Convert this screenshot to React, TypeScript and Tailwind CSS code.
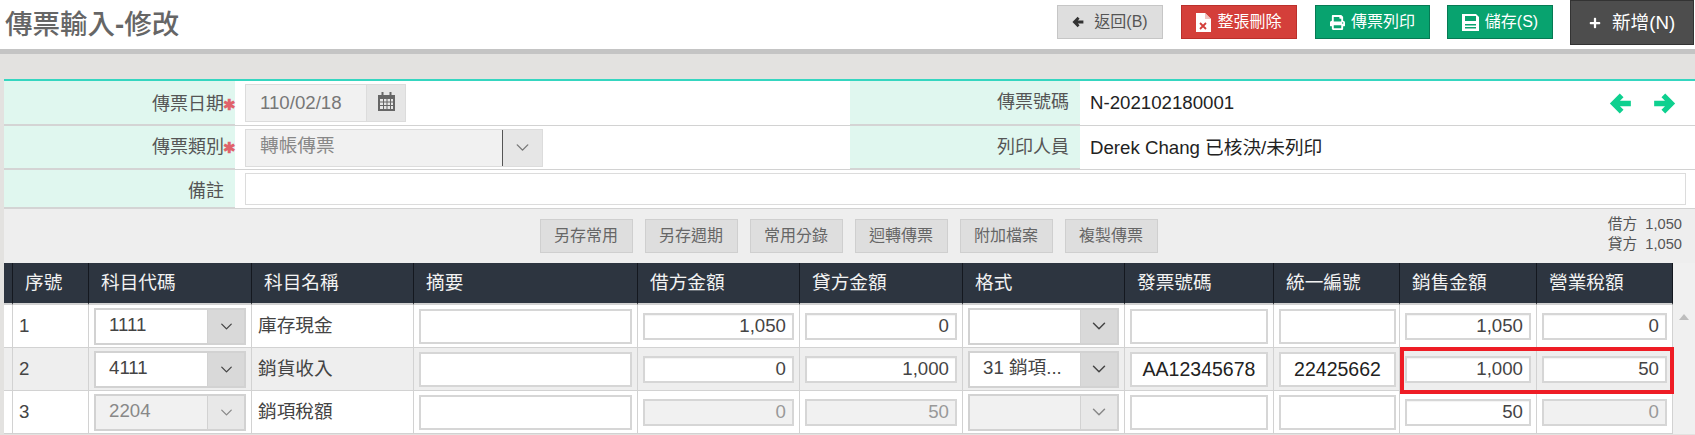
import { ChevronDown } from "lucide-react";
import { FaPlus, FaPrint } from "react-icons/fa";

const font = "font-['Liberation_Sans','Noto_Sans_CJK_TC',sans-serif]";

function Arrow({ size, flip }: { size: number; flip?: boolean }) {
  return (
    <svg width={size} height={size} viewBox="0 0 20 20" className={flip ? "-scale-x-100" : ""}>
      <path d="M11 3L4 10l7 7M5 10h14" fill="none" stroke="currentColor" strokeWidth="4.6" />
    </svg>
  );
}

function CalendarIcon() {
  return (
    <svg width="17" height="19" viewBox="0 0 17 19" className="text-[#666]">
      <path d="M0 3h17v16H0z" fill="currentColor" />
      <path d="M3.5 0h2v4.5h-2zM11.5 0h2v4.5h-2z" fill="currentColor" />
      <path
        d="M2 7h3v2.5H2zM6 7h2.5v2.5H6zM9.5 7H12v2.5H9.5zM13 7h2v2.5h-2zM2 10.5h3V13H2zM6 10.5h2.5V13H6zM9.5 10.5H12V13H9.5zM13 10.5h2V13h-2zM2 14h3v3H2zM6 14h2.5v3H6zM9.5 14H12v3H9.5zM13 14h2v3h-2z"
        fill="#e6e6e6"
      />
    </svg>
  );
}

function FileXIcon() {
  return (
    <svg width="15" height="19" viewBox="0 0 15 19">
      <path d="M0 0h9l6 6v13H0z" fill="#fff" />
      <path d="M9 0l6 6H9z" fill="#f0c4c2" />
      <path d="M4 10l6 6M10 10l-6 6" stroke="#d33f3a" strokeWidth="1.8" />
    </svg>
  );
}

function SaveIcon() {
  return (
    <svg width="17" height="17" viewBox="0 0 17 17">
      <path d="M0 0h14l3 3v14H0z" fill="#fff" />
      <path d="M3 2h11v5H3zM3 10h11v1.5H3zM3 13h11v1.5H3z" fill="#08a36f" />
    </svg>
  );
}

function TopButton({ className, children }: { className: string; children: React.ReactNode }) {
  return (
    <button className={`flex h-[34px] items-center justify-center gap-[6px] border text-[16px] ${className}`}>
      {children}
    </button>
  );
}

function FormLabel({ text, required, className = "" }: { text: string; required?: boolean; className?: string }) {
  return (
    <div className={`flex items-center justify-end border-b-2 border-[#d4d4d4] bg-[#e0f7ef] text-[18px] text-[#555] ${className}`}>
      <span>{text}</span>
      <span className="flex w-[11px] justify-center pt-[2px] text-[15px] font-bold text-[#e0636b]">{required ? "✱" : ""}</span>
    </div>
  );
}

function ToolButton({ text }: { text: string }) {
  return (
    <button className="h-[34px] w-[93px] border border-[#cfcfcf] bg-[#dedede] text-[16px] text-[#666]">{text}</button>
  );
}

function CellSelect({ value, disabled, size, addon }: { value: string; disabled?: boolean; size: number; addon: string }) {
  return (
    <div className={`flex h-[37px] border-2 border-[#d2d2d2] ${disabled ? "bg-[#f1f1f1] text-[#888]" : "bg-white text-[#444]"}`}>
      <div className="min-w-0 flex-1 truncate pl-[13px] text-[18.67px] leading-[30px]">{value}</div>
      <div className={`flex ${addon} items-center justify-center border-l border-[#d2d2d2] ${disabled ? "bg-[#e8e8e8]" : "bg-[#d9d9d9]"}`}>
        <ChevronDown size={size} strokeWidth={1.6} className={disabled ? "text-[#888]" : "text-[#444]"} />
      </div>
    </div>
  );
}

function TextBox({ value = "" }: { value?: string }) {
  return (
    <input
      readOnly
      value={value}
      className="block h-[35px] w-full border-2 border-[#d6d6d6] bg-white text-center text-[19.5px] text-[#222] outline-none"
    />
  );
}

function Amount({ value, disabled }: { value: string; disabled?: boolean }) {
  return (
    <input
      readOnly
      value={value}
      className={`block h-[27px] w-full border-2 border-[#d6d6d6] pr-[6px] text-right text-[18.67px] outline-none ${
        disabled ? "bg-[#f1f1f1] text-[#999]" : "bg-white text-[#444] shadow-[inset_0_1px_1px_rgba(0,0,0,0.05)]"
      }`}
    />
  );
}

const headers = ["序號", "科目代碼", "科目名稱", "摘要", "借方金額", "貸方金額", "格式", "發票號碼", "統一編號", "銷售金額", "營業稅額"];

const rows = [
  { no: "1", code: "1111", name: "庫存現金", debit: "1,050", credit: "0", format: "", invoice: "", tax: "", sales: "1,050", vat: "0" },
  { no: "2", code: "4111", name: "銷貨收入", debit: "0", credit: "1,000", format: "31 銷項...", invoice: "AA12345678", tax: "22425662", sales: "1,000", vat: "50" },
  { no: "3", code: "2204", name: "銷項稅額", debit: "0", credit: "50", format: "", invoice: "", tax: "", sales: "50", vat: "0", locked: true },
];

const td = "border-r border-b border-[#d2d2d2] px-[5px] align-middle";

export default function App() {
  return (
    <div className={`h-[435px] w-[1695px] overflow-hidden bg-[#e3e2e0] ${font}`}>
      <header className="flex h-[54px] items-start justify-between border-b-[5px] border-[#c4c4c4] bg-white">
        <h1 className="pl-[5px] pt-[9px] text-[27.5px] leading-[32px] font-medium text-[#666]">
          傳票輸入<span className="font-bold">-</span>修改
        </h1>
        <div className="flex items-start pr-[1px]">
          <TopButton className="mt-[5px] w-[106px] border-[#c6c6c6] bg-[#dedede] text-[#555]">
            <span className="text-[#333]"><Arrow size={12} /></span>
            <span className="ml-[4px]">返回(B)</span>
          </TopButton>
          <TopButton className="mt-[5px] ml-[18px] w-[116px] border-[#bb2f2b] bg-[#d43f3a] text-white">
            <FileXIcon />
            <span>整張刪除</span>
          </TopButton>
          <TopButton className="mt-[5px] ml-[18px] w-[115px] border-[#067a54] bg-[#08a36f] text-white">
            <FaPrint size={15} />
            <span>傳票列印</span>
          </TopButton>
          <TopButton className="mt-[5px] ml-[17px] w-[106px] border-[#067a54] bg-[#08a36f] text-white">
            <SaveIcon />
            <span>儲存(S)</span>
          </TopButton>
          <button className="ml-[17px] flex h-[45px] w-[124px] items-center justify-center gap-[11px] border border-[#333] bg-[#4d4d4d] text-[18.67px] text-white">
            <FaPlus size={12} />
            <span>新增(N)</span>
          </button>
        </div>
      </header>

      <div className="ml-[4px] mt-[25px] border-t-2 border-[#35d6c0] bg-white">
        <div className="grid grid-cols-[231px_615px_230px_1fr] grid-rows-[45px_44px_39px] text-[18.67px]">
          <FormLabel text="傳票日期" required className="pt-[3px]" />
          <div className="flex items-center border-b border-[#d2d2d2] pl-[10px]">
            <div className="flex h-[38px] w-[161px] border border-[#dcdcdc] bg-[#f1f1f1] text-[#777]">
              <div className="flex-1 pl-[14px] leading-[36px]">110/02/18</div>
              <div className="flex w-[39px] items-center justify-center border-l border-[#dcdcdc] bg-[#e6e6e6] pb-[4px]">
                <CalendarIcon />
              </div>
            </div>
          </div>
          <FormLabel text="傳票號碼" />
          <div className="flex items-center justify-between border-b border-[#d2d2d2] pl-[10px] pr-[19px] text-[#222]">
            <span>N-202102180001</span>
            <div className="flex gap-[21px] text-[#0ed08f]">
              <Arrow size={23} />
              <Arrow size={23} flip />
            </div>
          </div>

          <FormLabel text="傳票類別" required />
          <div className="flex items-center border-b border-[#d2d2d2] pl-[10px]">
            <div className="flex h-[38px] w-[298px] border border-[#dcdcdc] bg-[#f1f1f1] text-[#888]">
              <div className="flex-1 pl-[14px] leading-[32px]">轉帳傳票</div>
              <div className="flex w-[40px] items-center justify-center border-l border-[#555] bg-[#e6e6e6]">
                <ChevronDown size={21} strokeWidth={1.6} className="text-[#777]" />
              </div>
            </div>
          </div>
          <FormLabel text="列印人員" />
          <div className="flex items-center border-b border-[#d2d2d2] pl-[10px] text-[#222]">Derek Chang 已核決/未列印</div>

          <FormLabel text="備註" className="pt-[5px]" />
          <div className="col-span-3 flex items-center border-b border-[#d2d2d2] pl-[10px] pr-[9px]">
            <input readOnly className="h-[32px] w-full border border-[#dcdcdc] bg-white outline-none" />
          </div>
        </div>

        <div className="relative flex h-[54px] items-start justify-center gap-[12px] bg-[#eeeeee] pr-[2px] pt-[10px]">
          <ToolButton text="另存常用" />
          <ToolButton text="另存週期" />
          <ToolButton text="常用分錄" />
          <ToolButton text="迴轉傳票" />
          <ToolButton text="附加檔案" />
          <ToolButton text="複製傳票" />
          <div className="absolute right-[13px] top-[5px] text-right text-[14.67px] leading-[20px] text-[#555]">
            <div>借方&nbsp;&nbsp;1,050</div>
            <div>貸方&nbsp;&nbsp;1,050</div>
          </div>
        </div>

        <div className="relative flex bg-[#f0f0f0]">
          <table className="w-[1669px] table-fixed border-separate border-spacing-0 bg-white text-[18.67px]">
            <colgroup>
              <col className="w-[9px]" />
              <col className="w-[76px]" />
              <col className="w-[163px]" />
              <col className="w-[162px]" />
              <col className="w-[224px]" />
              <col className="w-[162px]" />
              <col className="w-[163px]" />
              <col className="w-[162px]" />
              <col className="w-[149px]" />
              <col className="w-[126px]" />
              <col className="w-[137px]" />
              <col className="w-[136px]" />
            </colgroup>
            <thead>
              <tr className="h-[42px]">
                <th className="border-b-2 border-r border-b-[#d2d2d2] border-r-[#14181f] bg-[#2d3540]" />
                {headers.map((h) => (
                  <th key={h} className="border-b-2 border-r border-b-[#d2d2d2] border-r-[#14181f] bg-[#2d3540] pl-[12px] text-left font-normal text-[#f2f2f2]">
                    {h}
                  </th>
                ))}
              </tr>
            </thead>
            <tbody>
              {rows.map((r) => (
                <tr key={r.no} className={`h-[43px] ${r.no === "2" ? "bg-[#eeeeee]" : "bg-white"} text-[#444]`}>
                  <td className="border-r border-b border-[#d2d2d2]" />
                  <td className={`${td} pl-[6px]`}>{r.no}</td>
                  <td className={td}>
                    <CellSelect value={r.code} disabled={r.locked} size={19} addon="w-[37px]" />
                  </td>
                  <td className={`${td} pl-[6px]`}>{r.name}</td>
                  <td className={td}><TextBox /></td>
                  <td className={td}><Amount value={r.debit} disabled={r.locked} /></td>
                  <td className={td}><Amount value={r.credit} disabled={r.locked} /></td>
                  <td className={td}>
                    <CellSelect value={r.format} disabled={r.locked} size={22} addon="w-[37px]" />
                  </td>
                  <td className={td}><TextBox value={r.invoice} /></td>
                  <td className={`${td} pr-[3px]`}><TextBox value={r.tax} /></td>
                  <td className={td}><Amount value={r.sales} /></td>
                  <td className={td}><Amount value={r.vat} disabled={r.locked} /></td>
                </tr>
              ))}
            </tbody>
          </table>
          <div className="flex-1 pt-[51px]">
            <div className="mx-auto h-0 w-0 border-x-[5px] border-b-[6px] border-x-transparent border-b-[#bdbdbd]" />
          </div>
          <div className="pointer-events-none absolute left-[1396px] top-[84px] h-[47px] w-[274px] border-4 border-[#ee1c25]" />
        </div>
      </div>
    </div>
  );
}
